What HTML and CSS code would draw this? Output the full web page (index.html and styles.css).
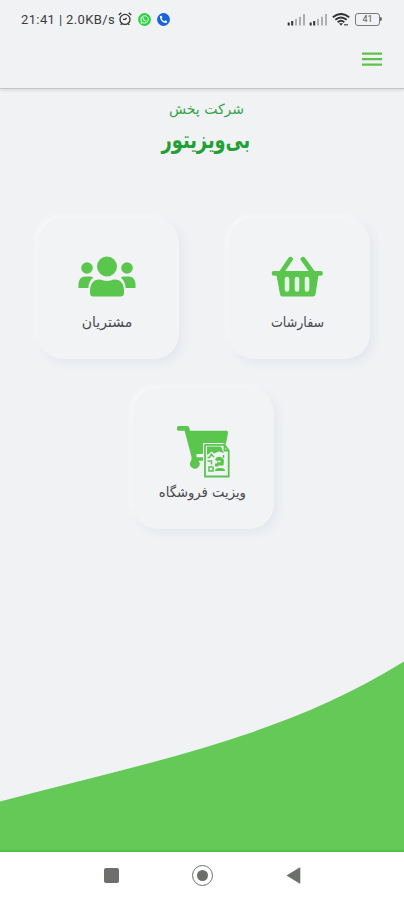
FILE: index.html
```html
<!DOCTYPE html>
<html lang="fa" dir="ltr">
<head>
<meta charset="utf-8">
<title>بی‌ویزیتور</title>
<link rel="stylesheet" href="styles.css">
</head>
<body>
<div class="screen">
  <header class="top">
    <div class="status">
      <span class="clock">21:41 | 2.0KB/s</span>
      <svg class="alarm" width="14" height="14" viewBox="0 0 14 14" fill="none" stroke="#333" stroke-width="1.3"><circle cx="7" cy="7.4" r="5"/><path d="M.7 3 3.3.8M13.3 3 10.7.8M2.7 12.8l1-1.2M11.3 12.8l-1-1.2M5 7.3h2.2L8.600 6"/></svg>
      <svg class="chat" width="13" height="13" viewBox="0 0 13 13"><circle cx="6.5" cy="6.5" r="6.4" fill="#2bd441"/><path d="M3 10.2l.5-1.8a3.7 3.7 0 1 1 1.4 1.3z" fill="none" stroke="#fff" stroke-width=".9"/><path d="M5.1 4.5c0 2 1.4 3.4 3.2 3.5" stroke="#fff" stroke-width="1.2" fill="none"/></svg>
      <svg class="call" width="13" height="13" viewBox="0 0 13 13"><circle cx="6.5" cy="6.5" r="6.4" fill="#1862dc"/><path d="M3.9 3.5c-.3 3.5 2.1 5.8 5.6 5.7" stroke="#fff" stroke-width="1.5" fill="none"/><path d="M3.5 3.1l1.2 2M7.7 8.2l2.1 1" stroke="#fff" stroke-width="2"/></svg>
      <span class="grow"></span>
      <svg class="signal" width="19" height="13" viewBox="0 0 19 13"><path d="M1.7 12.5v-3M5.2 12.5V8" stroke="#333" stroke-width="2"/><path d="M9 12.5V6M13 12.5V3.800M17 12.500V1" stroke="#aaacae" stroke-width="1.900"/></svg>
      <svg class="signal second" width="19" height="13" viewBox="0 0 19 13"><path d="M1.7 12.5v-3M5.2 12.5V8" stroke="#333" stroke-width="2"/><path d="M9 12.5V6M13 12.5V3.800M17 12.500V1" stroke="#aaacae" stroke-width="1.900"/></svg>
      <svg class="wifi" width="18" height="13" viewBox="0 0 18 13" fill="none" stroke="#333" stroke-width="1.900"><path d="M.8 4.200Q9-2.300 17.200 4.200M3.300 6.800Q9 2.200 14.700 6.800M5.700 9.200Q9 6.500 12.300 9.200"/><path d="M7 10.300h4L9 12.800z" fill="#333" stroke="none"/><path d="M12.300 11.700h3.500" stroke-width="1.600" stroke-dasharray="1.500 .6"/></svg>
      <span class="battery"><span class="cell">41</span><span class="tip"></span></span>
    </div>
    <button class="menu" aria-label="منو"><svg width="20" height="14" viewBox="0 0 20 14"><path d="M0 1.700h20M0 7.200h20M0 12.600h20" stroke="#5cc249" stroke-width="2.200"/></svg></button>
  </header>
  <main class="content">
    <p class="kind" dir="rtl">شرکت پخش</p>
    <h1 class="brand" dir="rtl">بی‌ویزیتور</h1>
    <div class="cards">
      <section class="card">
        <svg width="60" height="42" viewBox="0 0 60 42" fill="#5ac64e"><circle cx="30" cy="10.500" r="10"/><circle cx="10" cy="12" r="5.800"/><circle cx="50" cy="12" r="5.800"/><path d="M1.500 32q-.8-11.500 7-11.500h4.500q2 0 3.200 1.200Q12 24.500 11.300 32zM58.500 32q.8-11.500-7-11.500H47q-2 0-3.200 1.200Q48 24.500 48.700 32z"/><path d="M13 37q-.5-13.500 9.500-13.500 2 0 3 .8 4.500 1.600 9 0 1-.8 3-.8 10 0 9.500 13.500 0 3.500-3.500 3.500h-27Q13 40.500 13 37z"/></svg>
        <span class="label customers" dir="rtl">مشتریان</span>
      </section>
      <section class="card">
        <svg width="60" height="42" viewBox="0 0 60 42"><path d="M22.500 3.200 13 17M35 3.200 45 17" stroke="#5ac64e" stroke-width="4.800" stroke-linecap="round"/><path d="M6.700 15h48.600a2 2 0 0 1 0 4.800H53l-3 18.500q-.4 2.300-2.700 2.300H15.700q-2.300 0-2.700-2.300L9.500 19.800H6.700a2 2 0 0 1 0-4.800z" fill="#5ac64e" transform="translate(-.5 0) scale(.96 1)"/><path d="M19 23v10.500M29 23v10.500M39 23v10.500" stroke="#e5f7e5" stroke-width="4.600" stroke-linecap="round"/></svg>
        <span class="label orders" dir="rtl">سفارشات</span>
      </section>
      <section class="card visit">
        <svg width="60" height="54" viewBox="0 0 60 54"><path d="M5.500 1h8.800q1.700 0 2 1.800l.6 3h36.600q1.700 0 1.500 2L52 24l-5 5H23.500v3.200H34v3.500H25.500a4.800 4.800 0 1 1-7.700.5q1.200-1.500.700-4.200L11.600 5.800H5.500Q4 5.800 4 4.200V2.500Q4 1 5.500 1z" fill="#5ac64e"/><path d="M30 18h21.500l5.300 5.500V53.500H30z" fill="#f0f2f5"/><path d="M32 19.900h19.300M32 19.500v32h23.700V25.500l-4.200-5.500v5.500h4.200" fill="none" stroke="#5ac64e" stroke-width="1.800"/><path d="M34 21.500h14l1.500 3.500 1.500 3-5-1.500-5 2-2-2-5 3.500z" fill="#5ac64e"/><path d="M34.500 32.500h2l2-3.300 2.500 3M34.500 36h4v3.500M36 42h4v4h-4zM50.500 30v3" stroke="#5ac64e" stroke-width="1.500" fill="none"/><path d="M42 35q1-3.300 4-3.300t5 3.300l-.5 5.500H46l-1 1h-3v-3h2V36z" fill="#5ac64e"/><path d="M42 46q0-3 4-3h2q4 0 4 3z" fill="#5ac64e"/><path d="M44.500 36.500h3" stroke="#f0f2f5" stroke-width="1.500"/></svg>
        <span class="label shop" dir="rtl">ویزیت فروشگاه</span>
      </section>
    </div>
    <svg class="wave" width="404" height="191" viewBox="0 0 404 191"><path d="M0 140.500C140 103 280 78 404 .5V191H0z" fill="#65c957"/><path d="M0 190h404" stroke="#50bb43" stroke-width="1.500"/></svg>
  </main>
  <nav class="nav">
    <span class="recent"></span>
    <span class="home"></span>
    <svg width="15" height="17" viewBox="0 0 15 17"><path d="M.5 8.500 13.500.6q.8-.4.800.5v14.800q0 .9-.8.500z" fill="#6d6f6d"/></svg>
  </nav>
</div>
</body>
</html>
```
FILE: styles.css
```css
* { box-sizing: border-box; }
body { margin: 0; background: #f0f2f4; font-family: "DejaVu Sans", sans-serif; }
.screen { width: 404px; height: 900px; display: flex; flex-direction: column; overflow: hidden; background: #f0f2f4; }
.top { height: 89px; flex: none; border-bottom: 1.5px solid #c3c4c6; box-shadow: 0 1px 3px #00000020; }
.status { height: 38px; display: flex; align-items: center; padding: 0 22px 0 21px; }
.clock { font: 13px Roboto, sans-serif; color: #3c3c3c; width: 97px; white-space: nowrap; letter-spacing: .38px; }
.chat { margin-left: 6px; }
.call { margin-left: 6px; }
.grow { flex: 1; }
.second { margin-left: 3px; }
.wifi { margin: 0 5px 0 4px; }
.battery { display: flex; align-items: center; }
.cell { width: 25px; height: 13px; border: 1.5px solid #77797b; border-radius: 3px; font: 9px/11px Roboto, sans-serif; text-align: center; color: #555; }
.tip { width: 2px; height: 4px; background: #666; border-radius: 0 2px 2px 0; }
.menu { display: flex; width: 20px; margin: 14px 22px 0 auto; padding: 0; border: 0; background: none; }
.content { height: 763px; flex: none; display: flex; flex-direction: column; align-items: center; }
.kind { margin: 9px 0 0; padding-left: 9px; font-size: 14px; line-height: 22px; color: #36a34b; white-space: nowrap; }
.brand { margin: 3px 0 0; font-size: 24px; line-height: 34px; font-weight: bold; color: #22a035; white-space: nowrap; transform: translateX(4px) scaleX(.74); }
.cards { width: 332px; margin: 61px 0 0 3px; display: grid; grid-template-columns: 141px 141px; justify-content: space-between; row-gap: 29px; }
.card { height: 141px; border-radius: 25px; background: #f1f3f5; box-shadow: 4px 4px 8px #e4e7ed, -3px -3px 4px #f7f8fa; display: flex; flex-direction: column; align-items: center; padding: 38px 2px 0 0; }
.card svg { flex: none; }
.visit { grid-column: 1 / 3; width: 141px; justify-self: center; padding-top: 37px; }
.label { margin-top: 12px; font-size: 14px; line-height: 24px; color: #484a4d; white-space: nowrap; }
.orders { transform: scaleX(.9); }
.shop { transform: scaleX(.94); }
.visit .label { margin-top: 1px; }
.wave { margin-top: auto; flex: none; }
.nav { height: 48px; flex: none; background: #fff; display: flex; justify-content: center; align-items: center; gap: 73px; padding-bottom: 2px; }
.recent { width: 15px; height: 15px; border-radius: 2px; background: #6d6f6d; }
.home { width: 21px; height: 21px; border: 1.5px solid #6d6f6d; border-radius: 50%; display: flex; padding: 4px; }
.home::after { content: ""; flex: 1; border-radius: 50%; background: #6d6f6d; }
```
